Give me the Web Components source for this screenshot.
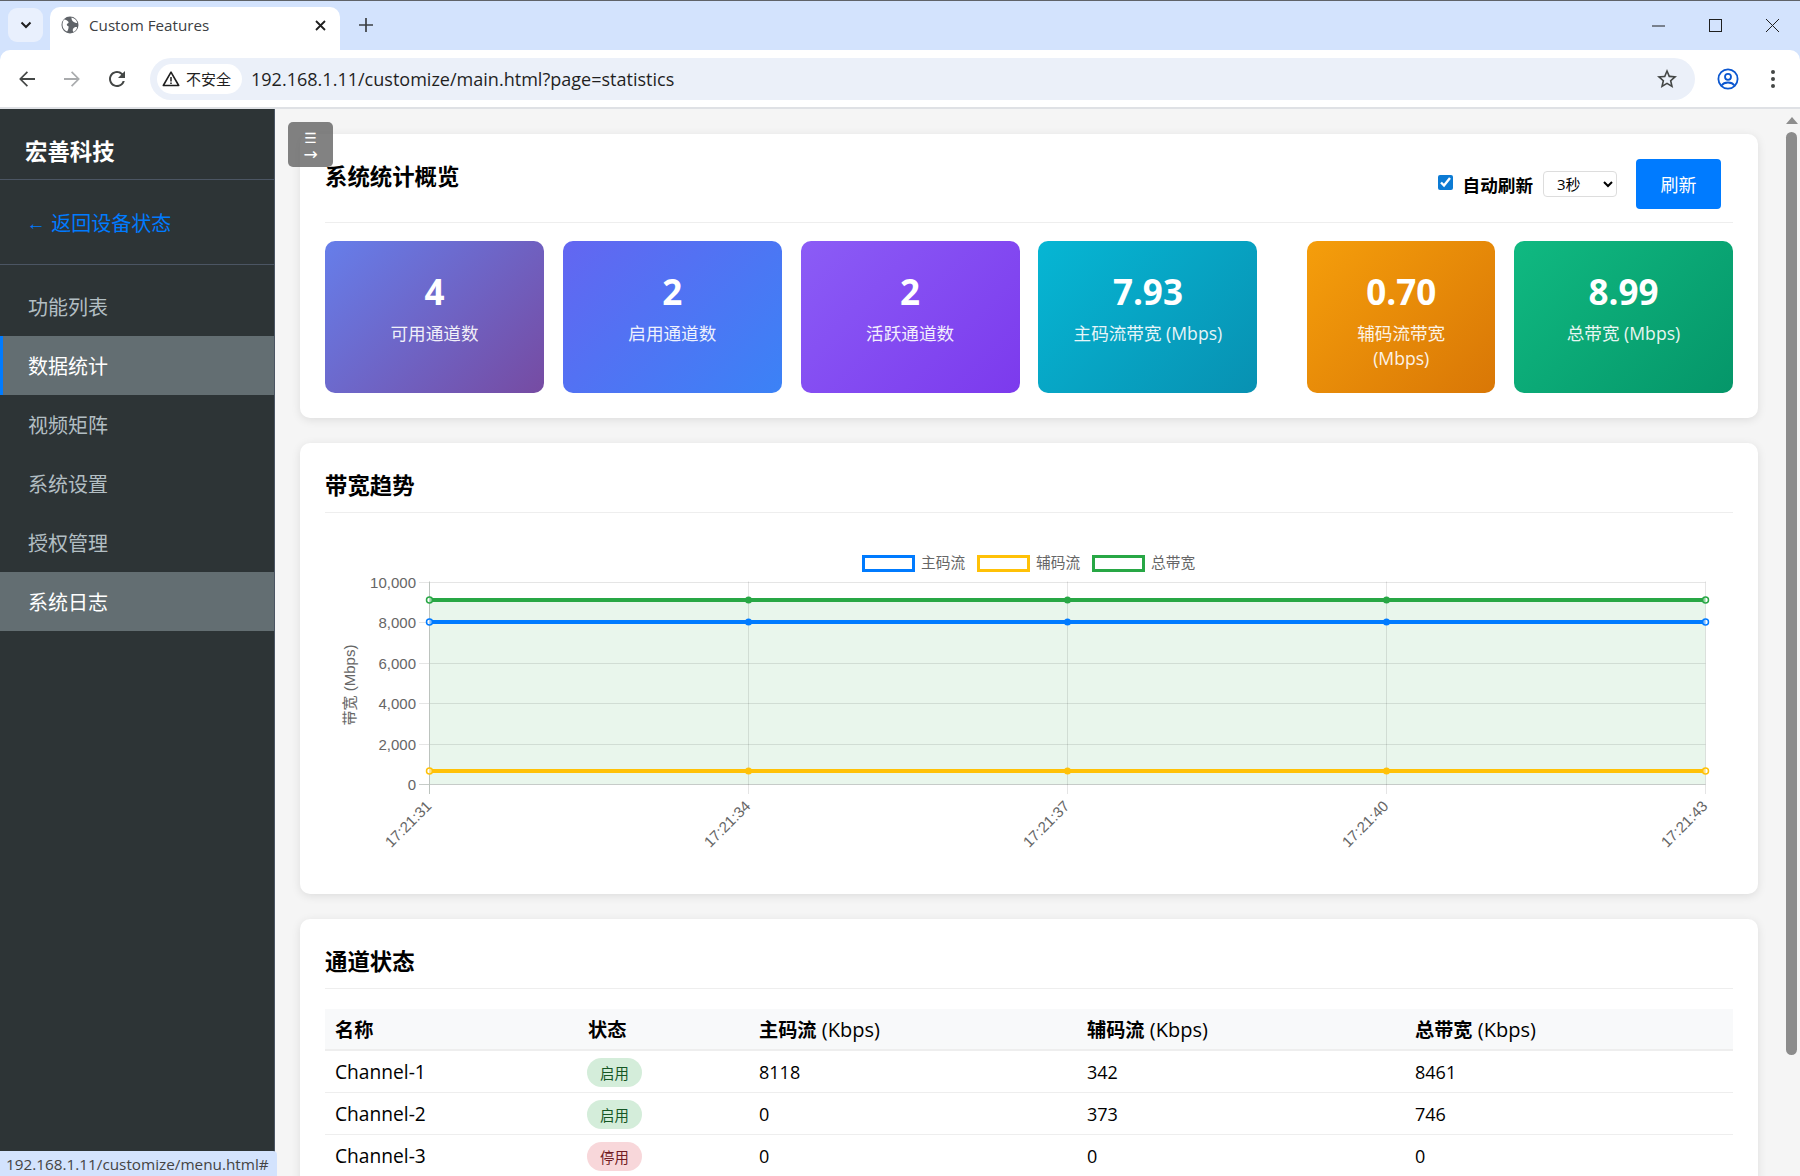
<!DOCTYPE html>
<html lang="zh-CN">
<head>
<meta charset="utf-8">
<title>Custom Features</title>
<style>
  html, body { margin: 0; height: 100%; overflow: hidden; }
  body {
    font-family: "Open Sans", "Noto Sans CJK SC", sans-serif;
    display: flex;
    flex-direction: column;
    height: 1176px;
    position: relative;
    color: #000;
  }
  .app { flex: 1; display: flex; min-height: 0; }
</style>
</head>
<body>
<browser-chrome></browser-chrome>
<div class="app">
  <app-sidebar>
    <side-item>功能列表</side-item>
    <side-item active>数据统计</side-item>
    <side-item>视频矩阵</side-item>
    <side-item>系统设置</side-item>
    <side-item>授权管理</side-item>
    <side-item hover>系统日志</side-item>
  </app-sidebar>
  <main-view>
    <panel-card heading="系统统计概览">
      <refresh-controls slot="actions"></refresh-controls>
      <stat-row>
        <stat-card value="4" from="#667eea" to="#764ba2" style="width:219px">可用通道数</stat-card>
        <stat-card value="2" from="#6366f1" to="#3b82f6" style="width:219px">启用通道数</stat-card>
        <stat-card value="2" from="#8b5cf6" to="#7c3aed" style="width:219px">活跃通道数</stat-card>
        <stat-card value="7.93" from="#06b6d4" to="#0891b2" style="width:219px">主码流带宽 (Mbps)</stat-card>
        <stat-card value="0.70" from="#f59e0b" to="#d97706" style="width:188px;margin-left:31px">辅码流带宽 (Mbps)</stat-card>
        <stat-card value="8.99" from="#10b981" to="#059669" style="width:219px">总带宽 (Mbps)</stat-card>
      </stat-row>
    </panel-card>
    <panel-card heading="带宽趋势">
      <bandwidth-chart></bandwidth-chart>
    </panel-card>
    <panel-card heading="通道状态">
      <channel-table></channel-table>
    </panel-card>
  </main-view>
  <fake-scrollbar></fake-scrollbar>
</div>
<sidebar-toggle></sidebar-toggle>
<status-bubble>192.168.1.11/customize/menu.html#</status-bubble>

<script>
class BrowserChrome extends HTMLElement {
  constructor() {
    super();
    this.attachShadow({ mode: "open" });
    this.shadowRoot.innerHTML = `
      <style>
        :host { display: block; height: 109px; flex: none; background: #d3e3fd; font-family: "Open Sans", "Noto Sans CJK SC", sans-serif; }
        .strip { height: 50px; box-sizing: border-box; border-top: 1px solid #5f6368; display: flex; align-items: flex-end; padding-left: 8px; position: relative; }
        .tabs-btn { width: 35px; height: 34px; background: #e9f0fd; border-radius: 9px; align-self: flex-start; margin-top: 7px; display: flex; align-items: center; justify-content: center; }
        .tab { width: 290px; height: 43px; margin-left: 7px; background: #fff; border-radius: 10px 10px 0 0; display: flex; align-items: center; box-sizing: border-box; padding: 0 14px 7px 11px; position: relative; }
        .tab .name { flex: 1; margin-left: 10px; font-size: 15.200px; color: #3c4043; white-space: nowrap; }
        .plus { margin-left: 19px; align-self: flex-start; margin-top: 17px; display: flex; }
        .win { margin-left: auto; align-self: flex-start; margin-top: 18px; display: flex; gap: 44px; padding-right: 21px; align-items: center; }
        .toolbar { background: #fff; border-radius: 10px 10px 0 0; border-bottom: 2px solid #dfe1e5; box-sizing: border-box; height: 59px; display: flex; align-items: center; position: relative; }
        .nav { display: flex; gap: 21px; padding-left: 15px; width: 150px; box-sizing: border-box; flex: none; }
        .omni { width: 1545px; height: 42px; background: #ebf0f9; border-radius: 21px; display: flex; align-items: center; box-sizing: border-box; padding-left: 7px; flex: none; }
        .chip { height: 30px; width: 85px; background: #fff; border-radius: 15px; display: flex; align-items: center; box-sizing: border-box; padding-left: 4px; font-size: 15px; color: #1f1f1f; gap: 5px; flex: none; white-space: nowrap; }
        .url { margin-left: 9px; font-size: 18.050px; color: #1f1f1f; white-space: nowrap; flex: 1; }
        .star { margin-right: 16px; display: flex; }
        .right { display: flex; align-items: center; margin-left: 22px; gap: 31px; }
      </style>
      <div class="strip">
        <div class="tabs-btn">
          <svg width="12" height="8" viewBox="0 0 12 8"><path d="M1.500 1.500 6 6l4.500-4.500" fill="none" stroke="#1f1f1f" stroke-width="2"/></svg>
        </div>
        <div class="tab">
          <svg width="18" height="18" viewBox="0 0 18 18">
            <circle cx="9" cy="9" r="8.500" fill="#5f6368"/>
            <path d="M3 3.500c2 .2 3.600 1 4.400 2.200.6 1-.3 1.800-1.500 2.200-.3 1.300.5 2.100 1.600 2.300.3 1.700-.2 3.500-1.400 5.300C3.500 14.500 1.500 12 1.500 9c0-2 .5-4 1.500-5.500zM10.500 1.500c2.800.5 5 2.500 5.800 5.200-1.300.4-2.500.2-3.500-.6-1.400-.9-2.500-2.300-2.300-4.600zM16 11c.2 1.800-1.300 3.800-3.500 5-1-1-1-2.600-.1-3.700 1-1.100 2.300-1.500 3.600-1.300z" fill="#fff"/>
          </svg>
          <span class="name">Custom Features</span>
          <svg width="11" height="11" viewBox="0 0 11 11"><path d="M1 1l9 9M10 1l-9 9" stroke="#1f1f1f" stroke-width="1.800"/></svg>
        </div>
        <div class="plus"><svg width="14" height="14" viewBox="0 0 14 14"><path d="M7 0v14M0 7h14" stroke="#3c4043" stroke-width="1.700"/></svg></div>
        <div class="win">
          <svg width="13" height="13" viewBox="0 0 13 13"><path d="M0 7h13" stroke="#1f1f1f" stroke-width="1"/></svg>
          <svg width="13" height="13" viewBox="0 0 13 13"><rect x=".5" y=".5" width="12" height="12" fill="none" stroke="#1f1f1f"/></svg>
          <svg width="13" height="13" viewBox="0 0 13 13"><path d="M0 0l13 13M13 0L0 13" stroke="#1f1f1f" stroke-width="1"/></svg>
        </div>
      </div>
      <div class="toolbar">
        <div class="nav">
          <svg width="24" height="24" viewBox="0 0 24 24"><path fill="#444746" d="M20 11.100H7.400l5.600-5.600L11.800 4.300 4.100 12l7.700 7.700 1.200-1.200-5.600-5.600H20z"/></svg>
          <svg width="24" height="24" viewBox="0 0 24 24"><path fill="#a9abad" d="M4 11.100h12.600L11 5.500l1.200-1.200 7.700 7.700-7.700 7.700-1.200-1.200 5.600-5.600H4z"/></svg>
          <svg width="24" height="24" viewBox="0 0 24 24"><path fill="#444746" d="M17.650 6.350A7.958 7.958 0 0 0 12 4c-4.420 0-7.990 3.580-7.990 8s3.570 8 7.990 8c3.730 0 6.840-2.550 7.730-6h-2.080A5.990 5.990 0 0 1 12 18c-3.310 0-6-2.690-6-6s2.690-6 6-6c1.660 0 3.140.690 4.220 1.780L13 11h7V4z"/></svg>
        </div>
        <div class="omni">
          <div class="chip">
            <svg width="20" height="20" viewBox="0 0 20 20"><path d="M10 3.200 2.300 16.500h15.400z" fill="none" stroke="#1f1f1f" stroke-width="1.600" stroke-linejoin="round"/><path d="M10 8v4.500M10 13.500v1.500" stroke="#1f1f1f" stroke-width="1.500"/></svg>
            <span>不安全</span>
          </div>
          <div class="url">192.168.1.11/customize/main.html?page=statistics</div>
          <div class="star"><svg width="24" height="24" viewBox="0 0 24 24"><path fill="#444746" d="M22 9.240l-7.190-.62L12 2 9.190 8.630 2 9.240l5.460 4.730L5.820 21 12 17.270 18.180 21l-1.630-7.030L22 9.240zM12 15.400l-3.760 2.270 1-4.280-3.320-2.880 4.380-.38L12 6.100l1.710 4.040 4.380.38-3.320 2.880 1 4.280L12 15.400z"/></svg></div>
        </div>
        <div class="right">
          <svg width="22" height="22" viewBox="0 0 22 22" fill="none" stroke="#0b57d0" stroke-width="1.800"><circle cx="11" cy="11" r="9.600"/><circle cx="11" cy="8.800" r="3"/><path d="M4.500 17.500c1.500-2.200 3.800-3 6.500-3s5 .8 6.500 3"/></svg>
          <svg width="6" height="20" viewBox="0 0 6 20" fill="#444746"><circle cx="3" cy="3" r="2"/><circle cx="3" cy="10" r="2"/><circle cx="3" cy="17" r="2"/></svg>
        </div>
      </div>
    `;
  }
}
customElements.define("browser-chrome", BrowserChrome);

class AppSidebar extends HTMLElement {
  constructor() {
    super();
    this.attachShadow({ mode: "open" });
    this.shadowRoot.innerHTML = `
      <style>
        :host { display: block; width: 275px; flex: none; box-sizing: border-box; background: #2d3436; border-right: 1px solid #4b5563; font-family: "Open Sans", "Noto Sans CJK SC", sans-serif; }
        h1 { margin: 0; font-size: 22.400px; line-height: 36px; font-weight: 700; color: #fff; padding: 25px 25px 9px; height: 71px; box-sizing: border-box; border-bottom: 1px solid #4b5563; }
        .back { display: block; height: 85px; line-height: 88px; box-sizing: border-box; padding-left: 26px; font-size: 20px; color: #007bff; border-bottom: 1px solid #4b5563; text-decoration: none; }
        .back span { display: inline-block; width: 20px; font-size: 19px; text-align: center; font-family: "Liberation Sans", sans-serif; position: relative; top: -1px; }
        nav { padding-top: 12px; display: flex; flex-direction: column; }
      </style>
      <h1>宏善科技</h1>
      <a class="back" href="#"><span>←</span> 返回设备状态</a>
      <nav><slot></slot></nav>
    `;
  }
}
customElements.define("app-sidebar", AppSidebar);

class SideItem extends HTMLElement {
  constructor() {
    super();
    this.attachShadow({ mode: "open" });
    this.shadowRoot.innerHTML = `
      <style>
        :host { display: block; height: 59px; line-height: 61px; box-sizing: border-box; padding-left: 28px; font-size: 20px; color: #b2bec3; }
        :host([active]) { background: #636e72; color: #fff; border-left: 3px solid #007bff; padding-left: 25px; }
        :host([hover]) { background: #636e72; color: #fff; }
      </style>
      <slot></slot>
    `;
  }
}
customElements.define("side-item", SideItem);

class MainView extends HTMLElement {
  constructor() {
    super();
    this.attachShadow({ mode: "open" });
    this.shadowRoot.innerHTML = `
      <style>
        :host { display: flex; flex-direction: column; gap: 25px; flex: 1; min-width: 0; background: #f5f5f5; padding: 25px; overflow: hidden; }
      </style>
      <slot></slot>
    `;
  }
}
customElements.define("main-view", MainView);

class PanelCard extends HTMLElement {
  constructor() {
    super();
    this.attachShadow({ mode: "open" });
    this.shadowRoot.innerHTML = `
      <style>
        :host { display: block; flex: none; background: #fff; border-radius: 10px; box-shadow: 0 2px 10px rgba(0,0,0,.1); padding: 25px; }
        header { display: flex; justify-content: space-between; align-items: flex-start; border-bottom: 1px solid #eee; margin-bottom: 18px; }
        h2 { margin: 0; padding-bottom: 8px; font-size: 22.400px; line-height: 36px; font-weight: 700; color: #000; }
      </style>
      <header>
        <h2>${this.getAttribute("heading") || ""}</h2>
        <slot name="actions"></slot>
      </header>
      <slot></slot>
    `;
  }
}
customElements.define("panel-card", PanelCard);

class RefreshControls extends HTMLElement {
  constructor() {
    super();
    this.attachShadow({ mode: "open" });
    this.shadowRoot.innerHTML = `
      <style>
        :host { display: flex; align-items: center; height: 50px; margin-bottom: 13px; padding-right: 12px; font-family: "Open Sans", "Noto Sans CJK SC", sans-serif; }
        label { display: flex; align-items: center; font-size: 17.600px; font-weight: 700; color: #000; }
        input { width: 15px; height: 15px; margin: 0 10px 0 0; accent-color: #0c7bd4; position: relative; top: -2px; }
        select { width: 74px; height: 26px; margin-left: 10px; font: 15px "Open Sans", "Noto Sans CJK SC", sans-serif; background: #fff; color: #000; border: 1px solid #ddd; border-radius: 4px; padding-left: 9px; }
        button { width: 85px; height: 50px; margin-left: 19px; border: 0; border-radius: 4px; background: #007bff; color: #fff; font: 18px "Open Sans", "Noto Sans CJK SC", sans-serif; }
      </style>
      <label><input type="checkbox" checked>自动刷新</label>
      <select><option>3秒</option><option>5秒</option><option>10秒</option></select>
      <button>刷新</button>
    `;
  }
}
customElements.define("refresh-controls", RefreshControls);

class StatRow extends HTMLElement {
  constructor() {
    super();
    this.attachShadow({ mode: "open" });
    this.shadowRoot.innerHTML = `
      <style>
        :host { display: flex; gap: 18.800px; }
      </style>
      <slot></slot>
    `;
  }
}
customElements.define("stat-row", StatRow);

class StatCard extends HTMLElement {
  constructor() {
    super();
    this.attachShadow({ mode: "open" });
    const from = this.getAttribute("from");
    const to = this.getAttribute("to");
    this.shadowRoot.innerHTML = `
      <style>
        :host { display: block; flex: none; box-sizing: border-box; height: 152px; padding: 27px 20px 0; border-radius: 10px; color: #fff; text-align: center; background: linear-gradient(135deg, ${from}, ${to}); }
        .num { font-size: 35px; font-weight: 700; line-height: 48px; }
        .label { margin-top: 5px; font-size: 17.600px; line-height: 25px; opacity: .9; }
      </style>
      <div class="num">${this.getAttribute("value")}</div>
      <div class="label"><slot></slot></div>
    `;
  }
}
customElements.define("stat-card", StatCard);

class BandwidthChart extends HTMLElement {
  constructor() {
    super();
    this.attachShadow({ mode: "open" });
    // plot area in page coordinates, the viewBox maps them 1:1
    const L = 429.5, R = 1705.5, T = 583.5, B = 786;
    const xs = [429.5, 748.5, 1067.5, 1386.5, 1705.5];
    const times = ["17:21:31", "17:21:34", "17:21:37", "17:21:40", "17:21:43"];
    const yOf = v => B - (v / 10000) * (B - T);
    let grid = "";
    for (let v = 0; v <= 10000; v += 2000) {
      const y = Math.round(yOf(v)) + 0.5;
      grid += `<path d="M419 ${y}H${R}" stroke="${v === 0 ? "#c6cbc8" : "rgba(0,0,0,.1)"}" stroke-width="1"/>`;
      grid += `<text x="416" y="${y + 5}" text-anchor="end">${v.toLocaleString("en-US")}</text>`;
    }
    xs.forEach((x, i) => {
      grid += `<path d="M${x} ${T}V796" stroke="${i === 0 ? "#bcc3be" : "rgba(0,0,0,.1)"}" stroke-width="1"/>`;
      grid += `<text transform="translate(${x + 3} 809) rotate(-45)" text-anchor="end">${times[i]}</text>`;
    });
    const series = [
      { y: 602, c: "#28a745" },
      { y: 624, c: "#007bff" },
      { y: 773, c: "#ffc107" }
    ];
    let lines = "";
    for (const s of series) {
      lines += `<path d="M${L} ${s.y}H${R}" stroke="${s.c}" stroke-width="4"/>`;
      xs.forEach((x, i) => {
        const edge = i === 0 || i === xs.length - 1;
        lines += `<circle cx="${x}" cy="${s.y}" r="${edge ? 3 : 3.500}" fill="${edge ? "rgba(255,255,255,.5)" : s.c}" stroke="${s.c}" stroke-width="${edge ? 1.500 : 0}"/>`;
      });
    }
    const legend = [[862, "主码流", "#007bff"], [977, "辅码流", "#ffc107"], [1092, "总带宽", "#28a745"]]
      .map(([x, t, c]) => `<rect x="${x + 1.500}" y="558.500" width="50" height="14" fill="#fff" stroke="${c}" stroke-width="3"/><text x="${x + 59}" y="570">${t}</text>`)
      .join("");
    this.shadowRoot.innerHTML = `
      <style>
        :host { display: block; height: 338px; }
        svg { display: block; }
        text { font: 15px "Liberation Sans", "Noto Sans CJK SC", sans-serif; fill: #666; }
        .legend text { font-size: 14.700px; }
      </style>
      <svg width="1408" height="338" viewBox="325 533 1408 338">
        <rect x="${L}" y="602" width="${R - L}" height="${B - 602}" fill="rgba(40,167,69,.1)"/>
        ${grid}
        ${lines}
        <text transform="translate(355 687) rotate(-90)" text-anchor="middle">带宽 (Mbps)</text>
        <g class="legend">${legend}</g>
      </svg>
    `;
  }
}
customElements.define("bandwidth-chart", BandwidthChart);

class StatusBadge extends HTMLElement {
  constructor() {
    super();
    this.attachShadow({ mode: "open" });
    this.shadowRoot.innerHTML = `
      <style>
        :host { display: inline-block; width: 55px; height: 29px; line-height: 31px; margin: 2px 0 0 -1px; border-radius: 15px; text-align: center; font-size: 14.400px; background: #d4edda; color: #155724; vertical-align: middle; }
        :host([off]) { background: #f8d7da; color: #721c24; }
      </style>
      <slot></slot>
    `;
  }
}
customElements.define("status-badge", StatusBadge);

class ChannelTable extends HTMLElement {
  constructor() {
    super();
    this.attachShadow({ mode: "open" });
    const rows = [
      ["Channel-1", true, "8118", "342", "8461"],
      ["Channel-2", true, "0", "373", "746"],
      ["Channel-3", false, "0", "0", "0"]
    ];
    const body = rows.map(r => `
      <tr>
        <td class="name">${r[0]}</td>
        <td><status-badge ${r[1] ? "" : "off"}>${r[1] ? "启用" : "停用"}</status-badge></td>
        <td>${r[2]}</td><td>${r[3]}</td><td>${r[4]}</td>
      </tr>`).join("");
    this.shadowRoot.innerHTML = `
      <style>
        :host { display: block; font-size: 18px; padding-top: 2px; }
        table { width: 1408px; table-layout: fixed; border-collapse: collapse; }
        th { height: 40px; background: #f8f9fa; text-align: left; font-size: 19.200px; font-weight: 700; padding: 0 10px; border-bottom: 2px solid #eee; }
        th span { font-size: 20px; font-weight: 400; }
        td { height: 41px; padding: 0 10px; border-bottom: 1px solid #eee; }
        td.name { font-size: 19.200px; }
      </style>
      <table>
        <colgroup><col style="width:253px"><col style="width:171px"><col style="width:328px"><col style="width:328px"><col style="width:328px"></colgroup>
        <thead><tr><th>名称</th><th>状态</th><th>主码流<span> (Kbps)</span></th><th>辅码流<span> (Kbps)</span></th><th>总带宽<span> (Kbps)</span></th></tr></thead>
        <tbody>${body}</tbody>
      </table>
    `;
  }
}
customElements.define("channel-table", ChannelTable);

class FakeScrollbar extends HTMLElement {
  constructor() {
    super();
    this.attachShadow({ mode: "open" });
    this.shadowRoot.innerHTML = `
      <style>
        :host { display: flex; flex-direction: column; align-items: center; width: 17px; flex: none; background: #f5f5f5; box-sizing: border-box; padding-top: 8px; }
        .up { width: 0; height: 0; border: 6.500px solid transparent; border-top: 0; border-bottom: 7px solid #8e8e8e; }
        .thumb { width: 11px; height: 923px; margin-top: 8px; background: #8c8c8c; border-radius: 6px; }
      </style>
      <div class="up"></div>
      <div class="thumb"></div>
    `;
  }
}
customElements.define("fake-scrollbar", FakeScrollbar);

class SidebarToggle extends HTMLElement {
  constructor() {
    super();
    this.attachShadow({ mode: "open" });
    this.shadowRoot.innerHTML = `
      <style>
        :host { position: absolute; left: 288px; top: 122px; width: 45px; height: 45px; background: rgba(99,99,99,.8); border-radius: 5px; color: #fff; text-align: center; font-family: "DejaVu Sans", sans-serif; }
        .bars { font-size: 14px; line-height: 14px; padding-top: 9px; height: 16px; }
        .arrow { font-size: 17px; line-height: 14px; }
      </style>
      <div class="bars">☰</div>
      <div class="arrow">→</div>
    `;
  }
}
customElements.define("sidebar-toggle", SidebarToggle);

class StatusBubble extends HTMLElement {
  constructor() {
    super();
    this.attachShadow({ mode: "open" });
    this.shadowRoot.innerHTML = `
      <style>
        :host { position: absolute; left: 0; bottom: 0; height: 25px; line-height: 27px; width: 277px; box-sizing: border-box; padding-left: 6px; background: #d3e3fd; border-top-right-radius: 4px; color: #444; font-size: 15.300px; white-space: nowrap; font-family: "Open Sans", sans-serif; }
      </style>
      <slot></slot>
    `;
  }
}
customElements.define("status-bubble", StatusBubble);
</script>
</body>
</html>
